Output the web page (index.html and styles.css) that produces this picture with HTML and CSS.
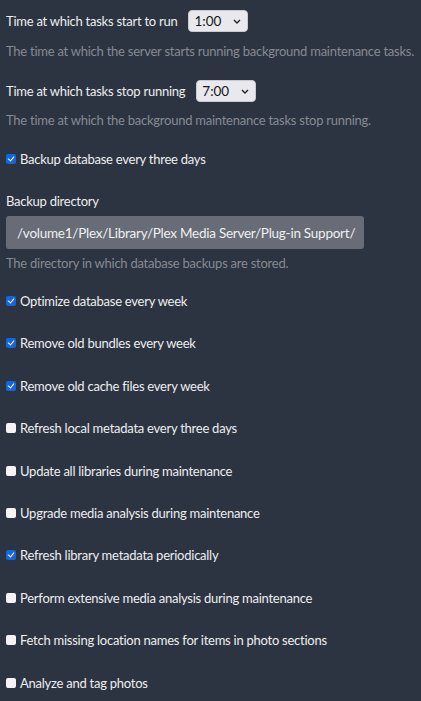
FILE: index.html
```html
<!DOCTYPE html>
<html lang="en">
<head>
<meta charset="utf-8">
<title>Scheduled Tasks</title>
<link rel="stylesheet" href="styles.css">
</head>
<body>
<div class="settings">
  <div class="field-row row-first">
    <label class="label">Time at which tasks start to run</label>
    <span class="select-wrap">
      <select class="select"><option>1:00</option></select>
      <svg class="chev" width="8" height="5" viewBox="0 0 8 5"><path d="M1 1 L4 4 L7 1" fill="none" stroke="#222" stroke-width="1.4"/></svg>
    </span>
  </div>
  <p class="desc desc-first">The time at which the server starts running background maintenance tasks.</p>

  <div class="field-row row-second">
    <label class="label">Time at which tasks stop running</label>
    <span class="select-wrap">
      <select class="select"><option>7:00</option></select>
      <svg class="chev" width="8" height="5" viewBox="0 0 8 5"><path d="M1 1 L4 4 L7 1" fill="none" stroke="#222" stroke-width="1.4"/></svg>
    </span>
  </div>
  <p class="desc desc-second">The time at which the background maintenance tasks stop running.</p>

  <label class="check check-backup"><input type="checkbox" class="box" checked> Backup database every three days</label>

  <div class="label label-dir">Backup directory</div>
  <div class="input">/volume1/Plex/Library/Plex Media Server/Plug-in Support/</div>
  <p class="desc desc-dir">The directory in which database backups are stored.</p>

  <div class="check-list">
    <label class="check"><input type="checkbox" class="box" checked> Optimize database every week</label>
    <label class="check"><input type="checkbox" class="box" checked> Remove old bundles every week</label>
    <label class="check"><input type="checkbox" class="box" checked> Remove old cache files every week</label>
    <label class="check"><input type="checkbox" class="box"> Refresh local metadata every three days</label>
    <label class="check"><input type="checkbox" class="box"> Update all libraries during maintenance</label>
    <label class="check"><input type="checkbox" class="box"> Upgrade media analysis during maintenance</label>
    <label class="check"><input type="checkbox" class="box" checked> Refresh library metadata periodically</label>
    <label class="check"><input type="checkbox" class="box"> Perform extensive media analysis during maintenance</label>
    <label class="check"><input type="checkbox" class="box"> Fetch missing location names for items in photo sections</label>
    <label class="check"><input type="checkbox" class="box"> Analyze and tag photos</label>
  </div>
</div>
</body>
</html>
```

FILE: styles.css
```css
html, body {
  margin: 0;
  padding: 0;
  background: #2d3441;
  height: 100%;
  overflow: hidden;
}
body {
  font-family: Lato, "Liberation Sans", sans-serif;
  font-size: 13px;
  line-height: 18px;
  letter-spacing: -0.25px;
  color: #e8e9eb;
}
.settings {
  padding: 10px 6px 0 6px;
  display: flex;
  flex-direction: column;
  align-items: flex-start;
}
.field-row {
  display: flex;
  align-items: center;
  gap: 11px;
  height: 22px;
}
.row-second { margin-top: 20px; }
.label { color: #eceef0; }
.select-wrap {
  position: relative;
  display: inline-block;
}
.select {
  appearance: none;
  -webkit-appearance: none;
  font-family: Lato, "Liberation Sans", sans-serif;
  font-size: 13.5px;
  line-height: 18px;
  height: 22px;
  width: 60px;
  padding: 0 0 0 5px;
  margin: 0;
  border: 1px solid #c9cacf;
  border-radius: 4px;
  background: #e9e9ed;
  color: #15161a;
}
.chev {
  position: absolute;
  right: 7px;
  top: 9px;
  pointer-events: none;
}
.desc {
  margin: 0;
  color: #858a93;
  white-space: nowrap;
}
.desc-first { margin-top: 10px; }
.desc-second { margin-top: 9px; }
.check {
  display: flex;
  align-items: center;
  gap: 4px;
  height: 18px;
  color: #eceef0;
  white-space: nowrap;
}
.check-backup { margin-top: 21px; }
.box {
  appearance: none;
  -webkit-appearance: none;
  width: 10px;
  height: 10px;
  margin: 0;
  border-radius: 2px;
  background: #f4f4f6;
  position: relative;
  flex: none;
}
.box:checked {
  background: #1466dc;
}
.box:checked::after {
  content: "";
  position: absolute;
  left: 3px;
  top: 1px;
  width: 3px;
  height: 5px;
  border: solid #fff;
  border-width: 0 1.6px 1.6px 0;
  transform: rotate(40deg);
}
.label-dir { margin-top: 24px; }
.input {
  margin-top: 6px;
  box-sizing: border-box;
  width: 358px;
  height: 33px;
  padding: 0 0 0 11px;
  display: flex;
  align-items: center;
  background: #686c76;
  border-radius: 3px;
  color: #eef0f2;
  font-size: 13.5px;
  white-space: nowrap;
  overflow: hidden;
}
.desc-dir { margin-top: 5px; }
.check-list {
  margin-top: 20px;
  display: flex;
  flex-direction: column;
  gap: 24.4px;
}
```
